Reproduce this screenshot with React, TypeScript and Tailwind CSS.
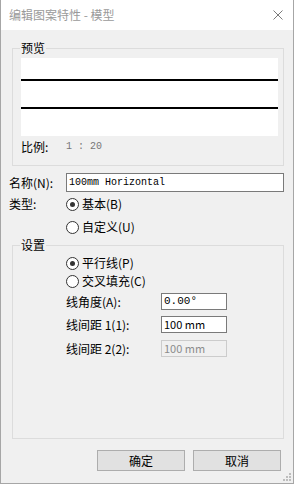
// 编辑图案特性对话框 — Windows 风格
const cjk = "font-['Noto_Sans_CJK_SC',sans-serif]";

function Radio({ checked, label }: { checked?: boolean; label: string }) {
  return (
    <div className="flex h-[16px] items-center">
      <span className="flex h-[13px] w-[13px] items-center justify-center rounded-full border border-[#333] bg-white">
        {checked && <span className="h-[5px] w-[5px] rounded-full bg-[#333]" />}
      </span>
      <span className="ml-[3px] text-[12px] leading-[16px] text-black">{label}</span>
    </div>
  );
}

function Field({ label, value, disabled, mono, top }: { label: string; value: string; disabled?: boolean; mono?: boolean; top: string }) {
  const base = "flex h-[17px] w-[66px] items-center pl-[2px] " + (mono ? "font-['Liberation_Mono',monospace] text-[11px] " : "text-[11px] ");
  return (
    <div className={`flex h-[17px] items-center ${top}`}>
      <span className="w-[95px] text-[12px] leading-[16px] text-black">{label}</span>
      <div
        className={
          disabled
            ? base + "border border-[#cccccc] bg-[#f0f0f0] text-[#8c8c8c]"
            : base + "border border-[#7a7a7a] bg-white text-black"
        }
      >
        {value}
      </div>
    </div>
  );
}

export default function App() {
  return (
    <div className={`flex h-[484px] w-[294px] flex-col border-x border-b border-[#a6a6a6] bg-[#f0f0f0] ${cjk}`}>
      {/* 标题栏 */}
      <div className="flex h-[30px] shrink-0 items-center justify-between bg-white pl-[8px] pr-[10px]">
        <span className="text-[12px] text-[#9a9a9a]">编辑图案特性 - 模型</span>
        <svg width="10" height="10" viewBox="0 0 10 10" className="mb-[1px]">
          <path d="M0.5 0.5 L9.5 9.5 M9.5 0.5 L0.5 9.5" stroke="#7a7a7a" strokeWidth="1" />
        </svg>
      </div>

      <div className="flex flex-1 flex-col pl-[8px] pr-[9px]">
        {/* 预览 */}
        <div className="relative ml-[3px] mt-[18px] border border-[#dcdcdc] pl-[8px] pr-[5px] pt-[9px] pb-[10px]">
          <span className="absolute -top-[9px] left-[7px] bg-[#f0f0f0] px-[1px] text-[12px] leading-[16px] text-black">预览</span>
          <div className="flex h-[78px] flex-col bg-white pt-[21px]">
            <div className="h-[2px] bg-black" />
            <div className="mt-[26px] h-[2px] bg-black" />
          </div>
          <div className="mt-[3px] flex h-[16px] items-center text-[12px] leading-[16px]">
            <span className="w-[45px] text-black">比例:</span>
            <span className="font-['Liberation_Mono',monospace] text-[10px] text-[#777]">1 : 20</span>
          </div>
        </div>

        {/* 名称 */}
        <div className="mt-[7px] flex h-[19px] items-center">
          <span className="w-[57px] text-[12px] leading-[16px] text-black">名称(N):</span>
          <div className="flex h-[19px] flex-1 items-center border border-[#7a7a7a] bg-white pl-[2px] font-['Liberation_Mono',monospace] text-[10px] text-black">
            100mm Horizontal
          </div>
        </div>

        {/* 类型 */}
        <div className="mt-[4px] flex">
          <span className="w-[57px] text-[12px] leading-[16px] text-black">类型:</span>
          <div className="flex flex-col gap-[7px]">
            <Radio checked label="基本(B)" />
            <Radio label="自定义(U)" />
          </div>
        </div>

        {/* 设置 */}
        <div className="relative ml-[3px] mt-[10px] flex h-[194px] flex-col border border-[#dcdcdc] pl-[53px] pt-[9px]">
          <span className="absolute -top-[9px] left-[7px] bg-[#f0f0f0] px-[1px] text-[12px] leading-[16px] text-black">设置</span>
          <div className="flex flex-col gap-[2px]">
            <Radio checked label="平行线(P)" />
            <Radio label="交叉填充(C)" />
          </div>
          <Field top="mt-[4px]" label="线角度(A):" value="0.00°" mono />
          <Field top="mt-[6px]" label="线间距 1(1):" value="100 mm" />
          <Field top="mt-[7px]" label="线间距 2(2):" value="100 mm" disabled />
        </div>

        {/* 按钮 */}
        <div className="mr-[3px] mt-[11px] flex justify-end gap-[8px]">
          <button className="h-[21px] w-[88px] border border-[#adadad] bg-[#e1e1e1] text-[12px] text-black">确定</button>
          <button className="h-[21px] w-[88px] border border-[#adadad] bg-[#e1e1e1] text-[12px] text-black">取消</button>
        </div>

        {/* 缩放手柄 */}
        <div className="mt-auto flex justify-end pb-[1px] -mr-[8px]">
          <svg width="9" height="9" viewBox="0 0 9 9">
            <rect x="6" y="0" width="2" height="2" fill="#bdbdbd" />
            <rect x="3" y="3" width="2" height="2" fill="#bdbdbd" />
            <rect x="6" y="3" width="2" height="2" fill="#bdbdbd" />
            <rect x="0" y="6" width="2" height="2" fill="#bdbdbd" />
            <rect x="3" y="6" width="2" height="2" fill="#bdbdbd" />
            <rect x="6" y="6" width="2" height="2" fill="#bdbdbd" />
          </svg>
        </div>
      </div>
    </div>
  );
}
